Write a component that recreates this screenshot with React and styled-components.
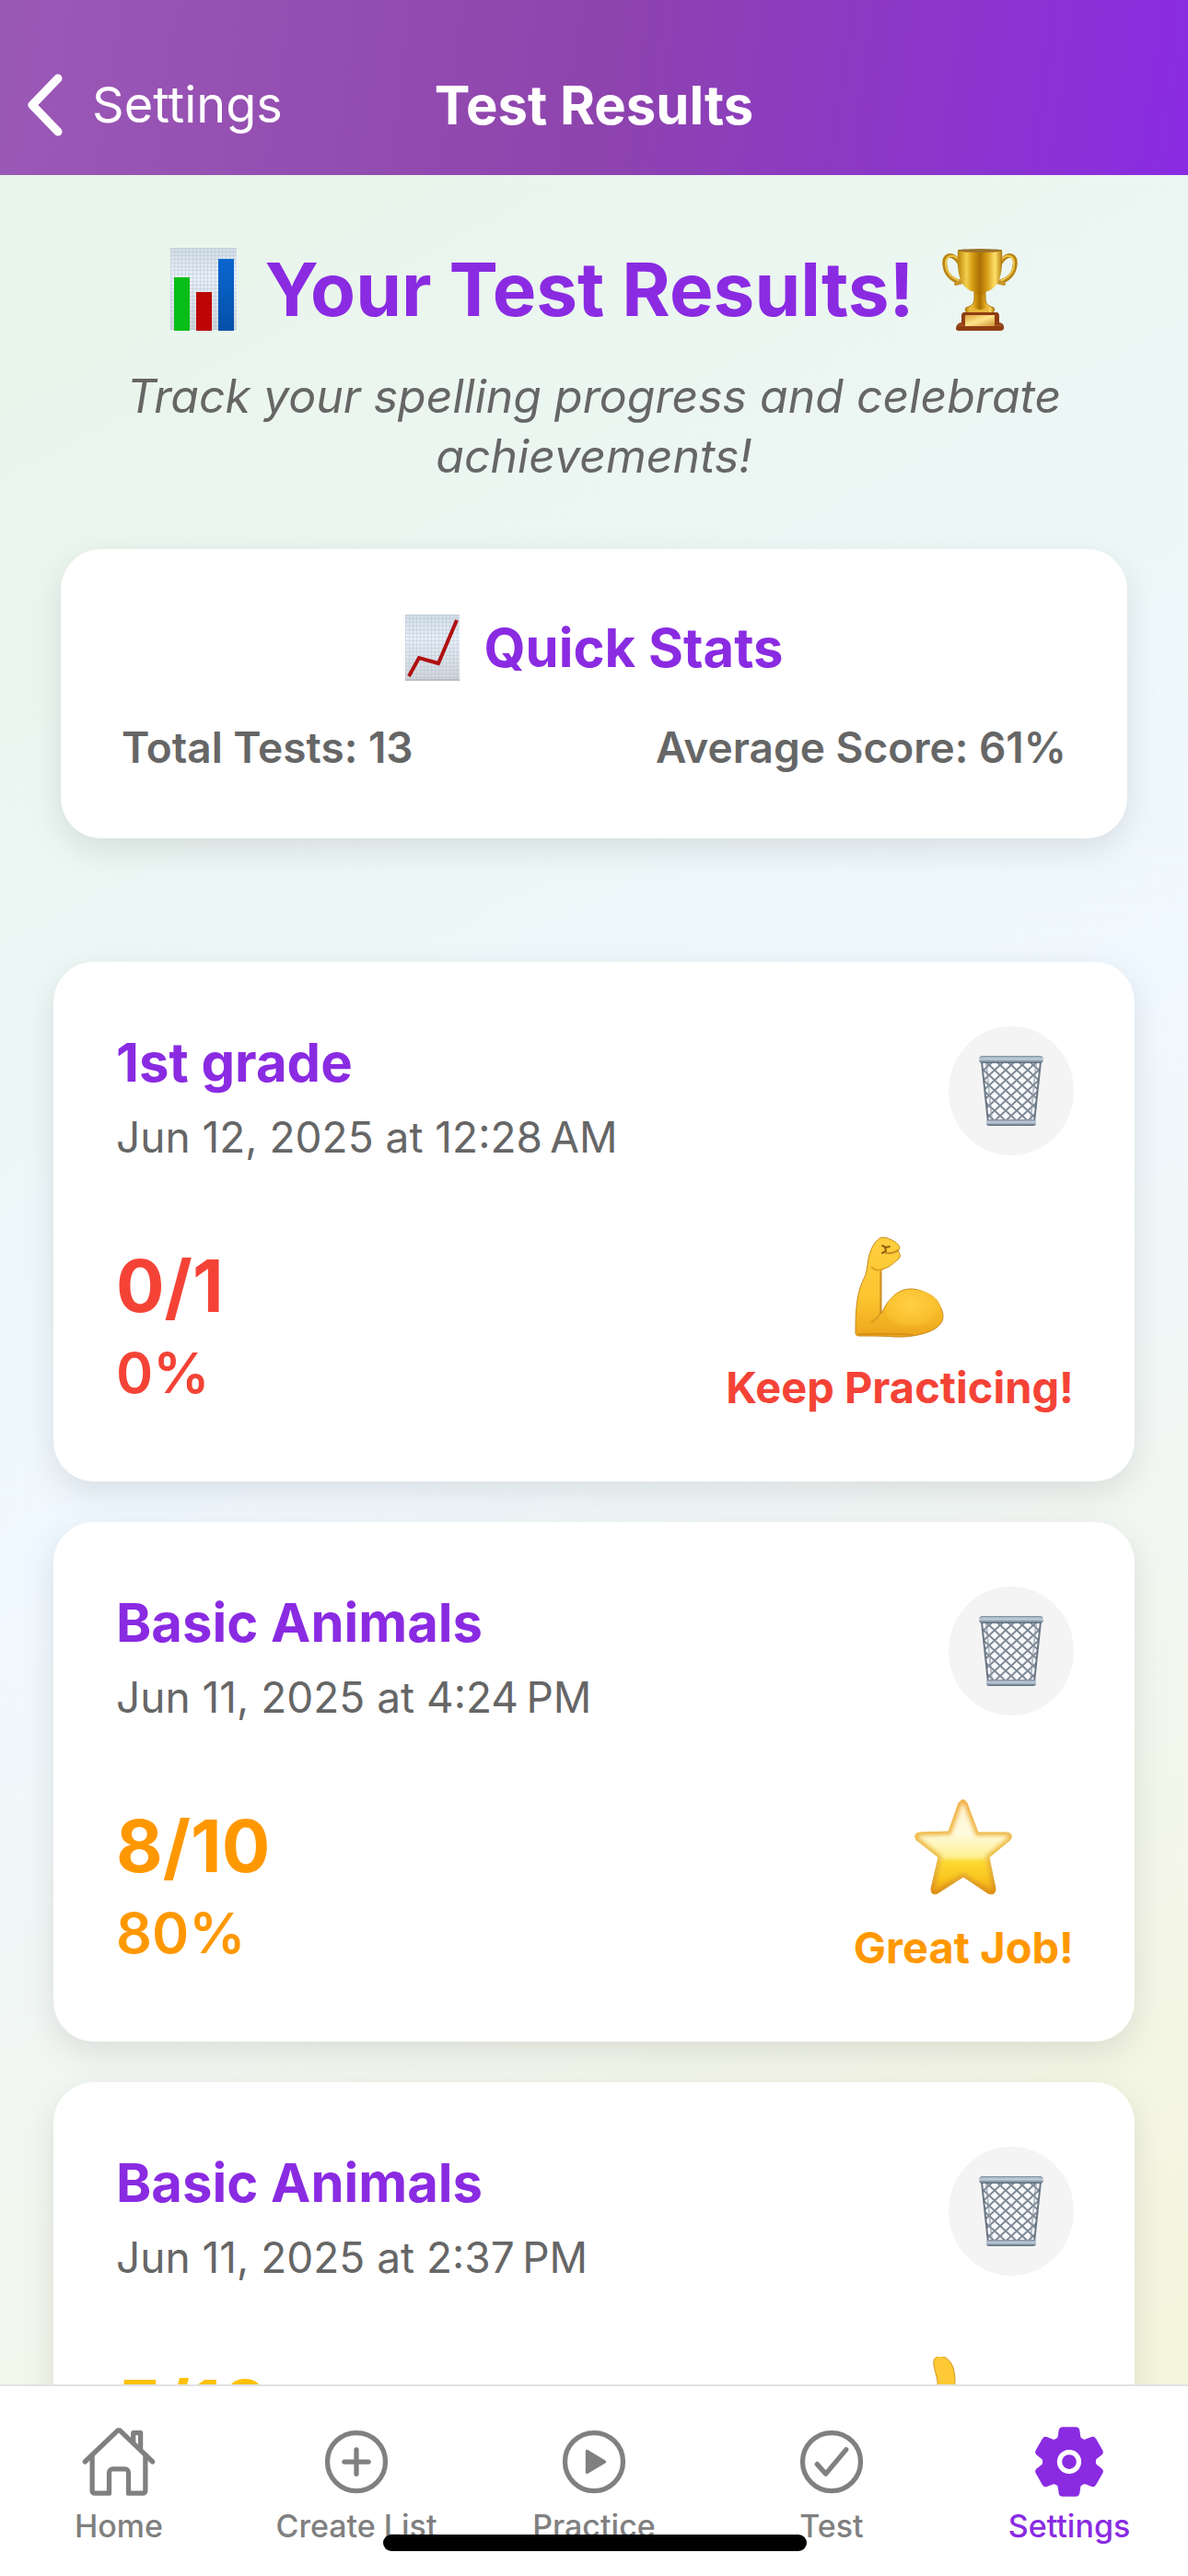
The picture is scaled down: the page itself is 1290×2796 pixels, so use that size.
import React, { useId } from "react";
import styled, { createGlobalStyle } from "styled-components";
import {
  IoHomeOutline,
  IoAddCircleOutline,
  IoPlayCircleOutline,
  IoCheckmarkCircleOutline,
  IoSettings,
} from "react-icons/io5";

const GlobalStyle = createGlobalStyle`
  *, *::before, *::after { box-sizing: border-box; }
  html, body { margin: 0; padding: 0; }
  body {
    font-family: Inter, "Liberation Sans", sans-serif;
    -webkit-font-smoothing: antialiased;
    color: #666666;
  }
  h1, h2, h3, p { margin: 0; }
  svg { display: block; flex: none; }
`;

const purple = "#8a2be2";

const Screen = styled.div`
  position: relative;
  display: flex;
  flex-direction: column;
  height: 100vh;
  overflow: hidden;
`;

const Header = styled.header`
  display: grid;
  grid-template-columns: 1fr auto 1fr;
  align-items: center;
  padding: 74px 26px 36px;
  color: #ffffff;
  background: linear-gradient(98deg, #9b59b6 0%, #8e44ad 50%, ${purple} 100%);
`;

const BackLink = styled.a`
  display: flex;
  align-items: center;
  gap: 32px;
  height: 80px;
  color: inherit;
  text-decoration: none;
  font-size: 54px;
  line-height: 80px;
`;

const HeaderTitle = styled.div`
  font-size: 58px;
  font-weight: 700;
  line-height: 80px;
`;

const Content = styled.main`
  flex: 1;
  min-height: 0;
  overflow-y: auto;
  scrollbar-width: none;
  padding: 72px 58px;
  background: linear-gradient(152deg, #e8f5e8 0%, #f0f8ff 50%, #f5f5dc 100%);
`;

const PageTitle = styled.h1`
  display: flex;
  align-items: center;
  justify-content: center;
  gap: 30px;
  color: ${purple};
  font-size: 80px;
  font-weight: 700;
  line-height: 104px;
`;

const Subtitle = styled.p`
  margin: 32px 64px 68px;
  font-size: 50px;
  font-style: italic;
  line-height: 65px;
  text-align: center;
`;

const Card = styled.section`
  border-radius: 44px;
  background: #ffffff;
  box-shadow: 0 12px 36px rgba(0, 0, 0, 0.1);
`;

const StatsCard = styled(Card)`
  margin: 0 8px 134px;
  padding: 71px 66px;
`;

const StatsTitle = styled.h2`
  display: flex;
  align-items: center;
  justify-content: center;
  gap: 26px;
  margin-bottom: 44px;
  color: ${purple};
  font-size: 58px;
  font-weight: 700;
  line-height: 72px;
`;

const StatsRow = styled.div`
  display: flex;
  justify-content: space-between;
  font-size: 46px;
  font-weight: 600;
  line-height: 56px;
`;

const ResultList = styled.div`
  display: flex;
  flex-direction: column;
  gap: 44px;
`;

const ResultCard = styled(Card)`
  display: flex;
  flex-direction: column;
  gap: 80px;
  padding: 70px 66px 74px 68px;
`;

const CardTop = styled.div`
  display: flex;
  align-items: flex-start;
  justify-content: space-between;
`;

const ListName = styled.h3`
  margin-bottom: 14px;
  color: ${purple};
  font-size: 58px;
  font-weight: 700;
  line-height: 78px;
`;

const DateText = styled.p`
  font-size: 46px;
  line-height: 56px;
`;

const DeleteButton = styled.button`
  display: flex;
  align-items: center;
  justify-content: center;
  width: 136px;
  height: 140px;
  padding: 0;
  border: 0;
  border-radius: 50%;
  background: #f4f4f4;
  cursor: pointer;
`;

const CardBottom = styled.div`
  display: flex;
  align-items: center;
  justify-content: space-between;
  color: ${(p) => p.$tone};
`;

const Score = styled.p`
  margin-bottom: 12px;
  font-size: 78px;
  font-weight: 700;
  line-height: 92px;
`;

const Percent = styled.p`
  font-size: 61px;
  font-weight: 600;
  line-height: 72px;
`;

const Verdict = styled.div`
  display: flex;
  flex-direction: column;
  align-items: center;
  gap: 26px;
  font-size: 47px;
  font-weight: 700;
  line-height: 56px;
`;

const TabBar = styled.nav`
  display: grid;
  grid-template-columns: repeat(5, 1fr);
  padding: 40px 0 34px;
  border-top: 2px solid #e2e2e2;
  background: #ffffff;
`;

const Tab = styled.a`
  display: flex;
  flex-direction: column;
  align-items: center;
  gap: 8px;
  color: ${(p) => (p.$active ? purple : "#808080")};
  font-size: 34px;
  font-weight: 500;
  line-height: 40px;
  text-decoration: none;
`;

const HomeIndicator = styled.div`
  position: absolute;
  bottom: 27px;
  left: 50%;
  width: 460px;
  height: 18px;
  margin-left: -229px;
  border-radius: 9px;
  background: #000000;
`;

function Chevron() {
  return (
    <svg width="42" height="70" viewBox="0 0 42 70" fill="none" aria-hidden="true">
      <path d="M37 6L9 35l28 29" stroke="#fff" strokeWidth="9" strokeLinecap="round" strokeLinejoin="round" />
    </svg>
  );
}

function ChartPaper({ id, width, height }) {
  return (
    <>
      <defs>
        <linearGradient id={`${id}p`} x1="0" y1="0" x2="0" y2="1">
          <stop offset="0" stopColor="#d3dde7" />
          <stop offset="0.35" stopColor="#e8f1fa" />
          <stop offset="1" stopColor="#d0d5da" />
        </linearGradient>
        <pattern id={`${id}g`} width="4" height="4" patternUnits="userSpaceOnUse">
          <path d="M0 0.500H4M0.500 0V4" stroke="#a9b8c8" strokeWidth="1" opacity="0.4" />
        </pattern>
      </defs>
      <rect width={width} height={height} fill={`url(#${id}p)`} />
      <rect width={width} height={height} fill={`url(#${id}g)`} />
    </>
  );
}

function BarChart() {
  const id = useId();
  return (
    <svg width="72" height="90" viewBox="0 0 72 90" aria-hidden="true">
      <defs>
        <linearGradient id={`${id}b`} x1="0" y1="0" x2="0" y2="1">
          <stop offset="0" stopColor="#0a66cf" />
          <stop offset="1" stopColor="#0550a8" />
        </linearGradient>
      </defs>
      <ChartPaper id={id} width={72} height={89} />
      <rect x="4" y="32" width="17" height="58" fill="#07bd17" />
      <rect x="28" y="48" width="17" height="42" fill="#bd0505" />
      <rect x="52" y="12" width="17" height="78" fill={`url(#${id}b)`} />
    </svg>
  );
}

function LineChart() {
  const id = useId();
  return (
    <svg width="60" height="72" viewBox="0 0 60 72" aria-hidden="true">
      <ChartPaper id={id} width={59} height={72} />
      <path d="M4 67L15 47l21 6L56 6" fill="none" stroke="#b00f10" strokeWidth="4" strokeLinejoin="miter" />
      <path d="M0 71H59" stroke="#b8bdc2" strokeWidth="2" />
    </svg>
  );
}

function Trophy() {
  const id = useId();
  return (
    <svg width="82" height="90" viewBox="0 0 82 90" aria-hidden="true">
      <defs>
        <linearGradient id={`${id}c`} x1="0" x2="1" y1="0" y2="0">
          <stop offset="0" stopColor="#b98308" />
          <stop offset="0.2" stopColor="#f3cf4d" />
          <stop offset="0.34" stopColor="#d59a12" />
          <stop offset="0.5" stopColor="#a86f04" />
          <stop offset="0.66" stopColor="#d79c15" />
          <stop offset="0.84" stopColor="#ffe06a" />
          <stop offset="1" stopColor="#b17a08" />
        </linearGradient>
        <linearGradient id={`${id}l`} x1="0" x2="1" y1="0" y2="1">
          <stop offset="0" stopColor="#dba43c" />
          <stop offset="0.5" stopColor="#ffe48a" />
          <stop offset="1" stopColor="#cf9230" />
        </linearGradient>
      </defs>
      <g fill="none" strokeLinecap="round">
        <path d="M18 15C10 4 1 8 3 19c1 9 7 16 17 18M64 15C72 4 81 8 79 19c-1 9-7 16-17 18" stroke="#b88313" strokeWidth="5" />
        <path d="M18 13C11 5 3 9 4 19c1 8 7 14 15 17M64 13C71 5 79 9 78 19c-1 8-7 14-15 17" stroke="#edc64b" strokeWidth="2" />
        <path d="M15 39l6-2M67 39l-6-2" stroke="#c8962b" strokeWidth="4" />
      </g>
      <path d="M35 46h12v9c0 6 3 8 9 10 2 3-1 6-4 6H30c-4 0-6-3-4-6 6-2 9-4 9-10z" fill={`url(#${id}c)`} stroke="#ad750b" />
      <path d="M17 2h48c1 20 0 43-19 46v3H36v-3C17 45 16 22 17 2z" fill={`url(#${id}c)`} />
      <ellipse cx="41" cy="3" rx="24" ry="2" fill="#9b722a" />
      <path d="M31 63q10 8 20 0v8H31z" fill="#e9b63b" />
      <path d="M24 70h35q3 0 3 4v7q6 1 5 7-1 2-4 2H19q-4 0-4-2 0-6 6-7v-7q0-4 3-4z" fill="#8f3d13" />
      <path d="M17 84h48" stroke="#b66425" strokeWidth="1" />
      <rect x="25" y="73" width="32" height="12" fill={`url(#${id}l)`} />
    </svg>
  );
}

function Basket() {
  const id = useId();
  return (
    <svg width="72" height="78" viewBox="0 0 72 78" aria-hidden="true">
      <defs>
        <pattern id={`${id}w`} width="12" height="11" patternUnits="userSpaceOnUse">
          <path d="M-1 -1L13 12M13 -1L-1 12" stroke="#7d8894" strokeWidth="2" fill="none" />
        </pattern>
        <linearGradient id={`${id}r`} x1="0" y1="0" x2="0" y2="1">
          <stop offset="0" stopColor="#7c8b9a" />
          <stop offset="0.45" stopColor="#c4d0dc" />
          <stop offset="1" stopColor="#536474" />
        </linearGradient>
      </defs>
      <path d="M4 7h64l-7 66H11z" fill="#f8f9fc" />
      <path d="M4 7h64l-7 66H11z" fill={`url(#${id}w)`} />
      <path d="M4 7l7 66M68 7l-7 66" stroke="#687583" strokeWidth="2" />
      <path d="M9 9l6 62M63 9l-6 62" stroke="#8b97a4" strokeWidth="2" opacity="0.6" />
      <rect x="1" y="1" width="70" height="8" rx="4" fill={`url(#${id}r)`} />
      <path d="M5 3h62" stroke="#b3cbd4" strokeWidth="1" />
      <rect x="9" y="70" width="54" height="7" rx="3" fill={`url(#${id}r)`} />
    </svg>
  );
}

function Arm() {
  const id = useId();
  return (
    <svg width="98" height="110" viewBox="0 0 98 110" aria-hidden="true">
      <defs>
        <linearGradient id={`${id}a`} x1="0" y1="0" x2="0" y2="1">
          <stop offset="0" stopColor="#ffcf3f" />
          <stop offset="0.6" stopColor="#fcc530" />
          <stop offset="1" stopColor="#eca51b" />
        </linearGradient>
        <radialGradient id={`${id}m`} cx="0.45" cy="0.35" r="0.7">
          <stop offset="0" stopColor="#ffd046" />
          <stop offset="0.7" stopColor="#f9c02c" stopOpacity="0.8" />
          <stop offset="1" stopColor="#eaa31a" stopOpacity="0" />
        </radialGradient>
      </defs>
      <path
        d="M17 17C20 8 25 2 30 1c6 0 16 5 18 9 2 3 0 5-1 6 3 3 3 7 0 9-5 4-9 9-18 11V84C36 68 47 57 61 57c18 0 35 16 35 30 0 17-33 23-52 22-12-1-28-1-39-1-4 0-4-2-4-5 0-22 1-42 9-57C15 36 13 27 17 17z"
        fill={`url(#${id}a)`}
        stroke="#c98a1c"
        strokeWidth="1"
      />
      <ellipse cx="64" cy="80" rx="30" ry="22" fill={`url(#${id}m)`} />
      <path d="M28 38v45" stroke="#b87818" strokeWidth="1" fill="none" />
      <path d="M18 33q5 5 12 3M28 83q-4 8-11 10" stroke="#d4941c" strokeWidth="2" fill="none" opacity="0.7" />
      <path d="M30 10l4 2 4-1M33 12l1 4-4 2" stroke="#94600f" strokeWidth="2" fill="none" strokeLinecap="round" strokeLinejoin="round" />
      <path d="M34 18q8 1 13-3" stroke="#c98a1c" strokeWidth="2" fill="none" strokeLinecap="round" />
      <path d="M4 106q45-1 60 1" stroke="#c68419" strokeWidth="2" fill="none" opacity="0.6" />
    </svg>
  );
}

function Star() {
  const id = useId();
  const shape =
    "M48 5q5-7 9 0l12 32 31 0q8 1 4 8L81 64l7 34q0 8-8 5L53 85 25 103q-7 3-7-5l8-34L2 45q-4-7 4-8l31-1z";
  return (
    <svg width="106" height="110" viewBox="0 -2 106 110" aria-hidden="true">
      <defs>
        <linearGradient id={`${id}s`} x1="0" y1="0" x2="0" y2="1">
          <stop offset="0" stopColor="#fff3cc" />
          <stop offset="0.35" stopColor="#fffbe0" />
          <stop offset="0.6" stopColor="#fdf096" />
          <stop offset="0.66" stopColor="#fcd932" />
          <stop offset="0.84" stopColor="#fac41e" />
          <stop offset="1" stopColor="#ee9a15" />
        </linearGradient>
        <linearGradient id={`${id}e`} x1="0" y1="0" x2="0" y2="1">
          <stop offset="0" stopColor="#f2ae45" />
          <stop offset="0.6" stopColor="#edc04a" />
          <stop offset="1" stopColor="#d98e16" />
        </linearGradient>
        <clipPath id={`${id}k`}>
          <path d={shape} />
        </clipPath>
        <filter id={`${id}f`}>
          <feGaussianBlur stdDeviation="2" />
        </filter>
      </defs>
      <path d={shape} fill={`url(#${id}s)`} />
      <g clipPath={`url(#${id}k)`}>
        <path d={shape} fill="none" stroke={`url(#${id}e)`} strokeWidth="7" filter={`url(#${id}f)`} />
      </g>
      <path d={shape} fill="none" stroke={`url(#${id}e)`} strokeWidth="1" />
    </svg>
  );
}

function Thumb() {
  return (
    <svg width="98" height="110" viewBox="0 0 98 110" aria-hidden="true">
      <path
        d="M33 4C35-3 49-3 54 12c4 13 1 25-1 34h32c10 0 12 12 4 15 7 4 6 13-1 15 5 4 4 12-3 14 4 6 0 14-8 14H40C18 104 4 92 4 76c0-14 12-20 20-28 9-8 14-12 13-21-1-8-5-16-4-23z"
        fill="#fdc934"
        stroke="#d39420"
        strokeWidth="1"
      />
    </svg>
  );
}

const results = [
  { name: "1st grade", date: "Jun 12, 2025 at 12:28\u202fAM", score: "0/1", percent: "0%", tone: "#f44336", label: "Keep Practicing!", Picture: Arm },
  { name: "Basic Animals", date: "Jun 11, 2025 at 4:24\u202fPM", score: "8/10", percent: "80%", tone: "#ff9800", label: "Great Job!", Picture: Star },
  { name: "Basic Animals", date: "Jun 11, 2025 at 2:37\u202fPM", score: "5/10", percent: "50%", tone: "#ffc107", label: "Good Work!", Picture: Thumb },
];

const tabs = [
  { label: "Home", Icon: IoHomeOutline },
  { label: "Create List", Icon: IoAddCircleOutline },
  { label: "Practice", Icon: IoPlayCircleOutline },
  { label: "Test", Icon: IoCheckmarkCircleOutline },
  { label: "Settings", Icon: IoSettings, active: true },
];

function Result({ name, date, score, percent, tone, label, Picture }) {
  return (
    <ResultCard>
      <CardTop>
        <div>
          <ListName>{name}</ListName>
          <DateText>{date}</DateText>
        </div>
        <DeleteButton type="button" aria-label={`Delete ${name}`}>
          <Basket />
        </DeleteButton>
      </CardTop>
      <CardBottom $tone={tone}>
        <div>
          <Score>{score}</Score>
          <Percent>{percent}</Percent>
        </div>
        <Verdict>
          <Picture />
          <span>{label}</span>
        </Verdict>
      </CardBottom>
    </ResultCard>
  );
}

export default function App() {
  return (
    <>
      <GlobalStyle />
      <Screen>
        <Header>
          <BackLink href="#settings">
            <Chevron />
            Settings
          </BackLink>
          <HeaderTitle>Test Results</HeaderTitle>
        </Header>
        <Content>
          <PageTitle>
            <BarChart />
            Your Test Results!
            <Trophy />
          </PageTitle>
          <Subtitle>Track your spelling progress and celebrate achievements!</Subtitle>
          <StatsCard>
            <StatsTitle>
              <LineChart />
              Quick Stats
            </StatsTitle>
            <StatsRow>
              <span>Total Tests: 13</span>
              <span>Average Score: 61%</span>
            </StatsRow>
          </StatsCard>
          <ResultList>
            {results.map((r) => (
              <Result key={r.date} {...r} />
            ))}
          </ResultList>
        </Content>
        <TabBar>
          {tabs.map(({ label, Icon, active }) => (
            <Tab key={label} href="#" $active={active} aria-current={active ? "page" : undefined}>
              <Icon size={84} aria-hidden="true" />
              {label}
            </Tab>
          ))}
        </TabBar>
        <HomeIndicator />
      </Screen>
    </>
  );
}
